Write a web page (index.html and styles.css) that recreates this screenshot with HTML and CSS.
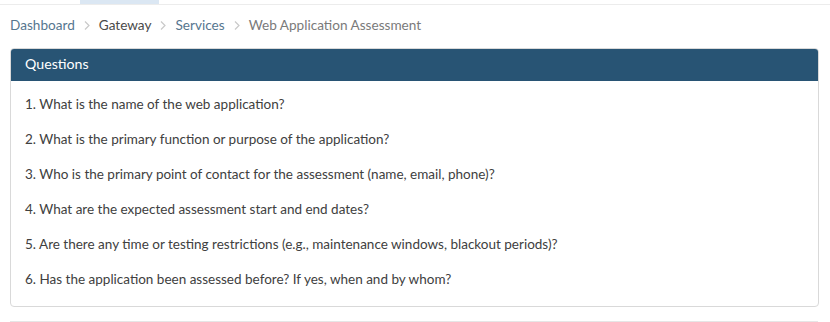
FILE: index.html
```html
<!DOCTYPE html>
<html>
<head>
<meta charset="utf-8">
<link rel="stylesheet" href="styles.css">
</head>
<body>
<div class="topbar"><div class="tab"></div></div>
<nav class="crumbs">
  <a class="crumb link">Dashboard</a>
  <svg class="sep" width="6" height="9" viewBox="0 0 6 9"><path d="M1 0.5 L5 4.5 L1 8.5" fill="none" stroke="#c9c9c9" stroke-width="1.2"/></svg>
  <a class="crumb dark">Gateway</a>
  <svg class="sep" width="6" height="9" viewBox="0 0 6 9"><path d="M1 0.5 L5 4.5 L1 8.5" fill="none" stroke="#c9c9c9" stroke-width="1.2"/></svg>
  <a class="crumb link">Services</a>
  <svg class="sep" width="6" height="9" viewBox="0 0 6 9"><path d="M1 0.5 L5 4.5 L1 8.5" fill="none" stroke="#c9c9c9" stroke-width="1.2"/></svg>
  <span class="crumb current">Web Application Assessment</span>
</nav>
<section class="card">
  <header class="card-head">Questions</header>
  <ol class="questions">
    <li>1. What is the name of the web application?</li>
    <li>2. What is the primary function or purpose of the application?</li>
    <li>3. Who is the primary point of contact for the assessment (name, email, phone)?</li>
    <li>4. What are the expected assessment start and end dates?</li>
    <li>5. Are there any time or testing restrictions (e.g., maintenance windows, blackout periods)?</li>
    <li>6. Has the application been assessed before? If yes, when and by whom?</li>
  </ol>
</section>
<div class="bottomline"></div>
</body>
</html>
```
FILE: styles.css
```css
html, body {
  margin: 0;
  padding: 0;
  background: #fff;
  font-family: "Lato", "Open Sans", sans-serif;
  width: 830px;
  height: 322px;
  overflow: hidden;
}
.topbar {
  height: 4px;
  border-bottom: 1px solid #ececec;
  padding-left: 80px;
}
.tab {
  width: 79px;
  height: 4px;
  background: #dbe7f3;
}
.crumbs {
  display: flex;
  align-items: center;
  gap: 9px;
  padding: 12px 0 0 10px;
  height: 17px;
  font-size: 13.6px;
  line-height: 17px;
}
.crumb { text-decoration: none; }
.link { color: #56768f; }
.dark { color: #4a4a4a; }
.current { color: #7a7a7a; }
.sep { display: block; }
.card {
  margin: 14px 11px 0 10px;
  border: 1px solid #d9d9d9;
  border-radius: 4px;
  height: 259px;
  box-sizing: border-box;
  overflow: hidden;
}
.card-head {
  background: #285474;
  color: #fff;
  font-size: 14.2px;
  height: 32px;
  line-height: 30px;
  padding-left: 14px;
}
.questions {
  list-style: none;
  margin: 0;
  padding: 14px 0 0 14px;
  display: flex;
  flex-direction: column;
  gap: 17px;
  font-size: 13.5px;
  line-height: 18px;
  color: #404040;
}
.bottomline {
  margin: 14px 12px 0 10px;
  border-top: 1px solid #e6e6e6;
}
```
